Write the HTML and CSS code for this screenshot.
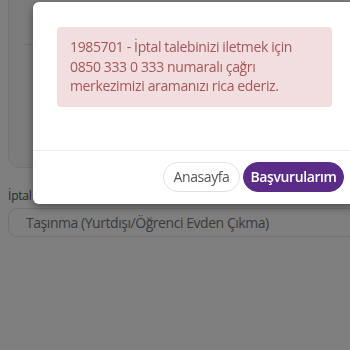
FILE: index.html
```html
<!DOCTYPE html>
<html lang="tr">
<head>
<meta charset="utf-8">
<link rel="stylesheet" href="styles.css">
</head>
<body>
<div class="page">
  <div class="panel">
    <div class="panel-line"></div>
  </div>
  <label class="label">İptal Nedeni</label>
  <div class="field">Taşınma (Yurtdışı/Öğrenci Evden Çıkma)</div>
</div>
<div class="overlay"></div>
<div class="modal">
  <div class="modal-body">
    <div class="alert">1985701 - İptal talebinizi iletmek için 0850 333 0 333 numaralı çağrı merkezimizi aramanızı rica ederiz.</div>
  </div>
  <div class="modal-footer">
    <button class="btn btn-light">Anasayfa</button>
    <button class="btn btn-primary">Başvurularım</button>
  </div>
</div>
</body>
</html>
```

FILE: styles.css
```css
* { box-sizing: border-box; }
html, body { margin: 0; padding: 0; }
body {
  width: 350px;
  height: 350px;
  overflow: hidden;
  background: #ffffff;
  font-family: "Open Sans", "Noto Sans", sans-serif;
  position: relative;
}
.page {
  padding: 0 0 0 8px;
}
.panel {
  margin-top: -12px;
  margin-right: 8px;
  height: 180px;
  border: 1px solid #e6e6e6;
  border-radius: 12px;
  background: #f8f8f8;
  padding: 0 5px;
}
.panel-line {
  margin-top: 55px;
  margin-left: 10px;
  border-top: 1px solid #dcdcdc;
}
.label {
  display: block;
  margin-top: 20px;
  font-size: 12px;
  line-height: 16px;
  letter-spacing: -0.2px;
  color: #555;
}
.field {
  margin-top: 4px;
  margin-right: -10px;
  height: 29px;
  border: 1px solid #e4e4e4;
  border-radius: 9px;
  padding: 0 17px;
  font-size: 14px;
  letter-spacing: -0.45px;
  line-height: 27px;
  color: #777;
  white-space: nowrap;
}
.overlay {
  position: fixed;
  inset: 0;
  background: rgba(0, 0, 0, 0.5);
}
.modal {
  position: absolute;
  left: 33px;
  top: 2px;
  width: 323px;
  background: #fff;
  border-radius: 6px;
  box-shadow: 0 3px 9px rgba(0, 0, 0, 0.4);
}
.modal-body {
  padding: 25px 24px 43px;
}
.alert {
  background: #f2dedf;
  color: #a4575a;
  border-radius: 4px;
  padding: 10px 13px 11px;
  font-size: 14px;
  letter-spacing: -0.37px;
  line-height: 19.5px;
}
.modal-footer {
  border-top: 1px solid #ececec;
  padding: 11px 12px 12px;
  display: flex;
  justify-content: flex-end;
  gap: 3px;
}
.btn {
  font-family: inherit;
  height: 30px;
  border-radius: 15px;
  font-size: 14px;
  letter-spacing: -0.4px;
  padding: 0;
  cursor: pointer;
}
.btn-light {
  background: #fff;
  border: 1px solid #e2e2e2;
  color: #555;
  width: 77px;
}
.btn-primary {
  background: #5b2b88;
  border: 1px solid #5b2b88;
  color: #fff;
  font-weight: 600;
  width: 101px;
}
```
